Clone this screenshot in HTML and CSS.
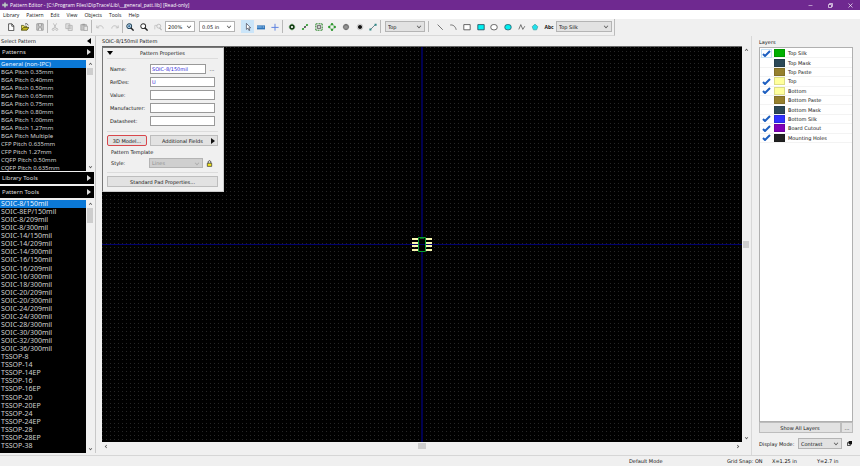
FILE: index.html
```
<!DOCTYPE html>
<html lang="en">
<head>
<meta charset="utf-8">
<title>Pattern Editor</title>
<link rel="stylesheet" href="styles.css">
</head>
<body>
<header class="titlebar">
  <svg class="logo" viewBox="0 0 10 10"><path d="M5 0L7 3H10V7H7L5 10L3 7H0V3H3Z" fill="#8f8aa8"/><path d="M5 1V9M1 5H9" stroke="#cfe0d0" stroke-width="1.6"/></svg>
  <h1 class="title">Pattern Editor - [C:\Program Files\DipTrace\Lib\__general_patt.lib] [Read-only]</h1>
  <div class="window-buttons">
    <button aria-label="Minimize"><svg viewBox="0 0 10 10"><path d="M1 5H9" stroke="#fff"/></svg></button>
    <button aria-label="Restore"><svg viewBox="0 0 10 10"><path d="M1 3H7V9H1ZM3 3V1H9V7H7" fill="none" stroke="#fff" stroke-width="1.3"/></svg></button>
    <button aria-label="Close"><svg viewBox="0 0 10 10"><path d="M1 1L9 9M9 1L1 9" stroke="#fff" stroke-width="1.3"/></svg></button>
  </div>
</header>
<nav class="menubar">
  <button>Library</button><button>Pattern</button><button>Edit</button><button>View</button><button>Objects</button><button>Tools</button><button>Help</button>
</nav>
<div class="toolbar">
  <div class="tools tools-3">
    <button aria-label="New"><svg viewBox="0 0 10 10"><path d="M2 1H6L8.500 3.500V9.500H2Z" fill="#fff" stroke="#333"/><path d="M6 1V4H8.500" fill="none" stroke="#333"/></svg></button>
    <button aria-label="Open"><svg viewBox="0 0 10 10"><path d="M0.500 9V3H3L4 4H7V5.500" fill="#e8dc50" stroke="#555520"/><path d="M0.500 9L3 5.500H10L7.500 9Z" fill="#c5b81c" stroke="#4a4a10"/><path d="M5 1.500C7 0 8 1 9 3" fill="none" stroke="#333"/></svg></button>
    <button aria-label="Save"><svg viewBox="0 0 10 10"><path d="M1 1H9V9H1Z" fill="#d5d5d5" stroke="#8d8d8d"/><path d="M3 1H7V4H3ZM3 9V6H7V9" fill="#eee" stroke="#8d8d8d"/></svg></button>
  </div>
  <div class="tools tools-3">
    <button aria-label="Cut" disabled><svg viewBox="0 0 10 10"><path d="M3 0.500L6.500 7M7 0.500L3.500 7" stroke="#b5b5b5"/><circle cx="2.800" cy="8" r="1.300" fill="none" stroke="#b5b5b5"/><circle cx="7.200" cy="8" r="1.300" fill="none" stroke="#b5b5b5"/></svg></button>
    <button aria-label="Copy" disabled><svg viewBox="0 0 10 10"><path d="M1 1H6V7H1ZM4 3H9V9.500H4Z" fill="#e4e4e4" stroke="#b0b0b0"/><path d="M5 5H8M5 7H8" stroke="#bbb"/></svg></button>
    <button aria-label="Paste" disabled><svg viewBox="0 0 10 10"><path d="M1 2H8V9H1Z" fill="#c4c4c4" stroke="#a4a4a4"/><path d="M3 1H6V3H3Z" fill="#999"/><path d="M5 4H9.500V9.500H5Z" fill="#e6e6e6" stroke="#a4a4a4"/></svg></button>
  </div>
  <div class="tools tools-2">
    <button aria-label="Undo" disabled><svg viewBox="0 0 10 10"><path d="M1 3V6H4M1 6C4 2 9 3 9 7" fill="none" stroke="#b9b9b9"/></svg></button>
    <button aria-label="Redo" disabled><svg viewBox="0 0 10 10"><path d="M9 3V6H6M9 6C6 2 1 3 1 7" fill="none" stroke="#b9b9b9"/></svg></button>
  </div>
  <div class="tools tools-zoom">
    <button aria-label="Zoom in"><svg viewBox="0 0 10 10"><circle cx="4" cy="4" r="3" fill="#cfe4f2" stroke="#26485e" stroke-width="1.300"/><path d="M2.500 4H5.500M4 2.500V5.500" stroke="#1c5a90"/><path d="M6 6L9.500 9.500" stroke="#222" stroke-width="1.800"/></svg></button>
    <button aria-label="Zoom out"><svg viewBox="0 0 10 10"><circle cx="4" cy="4" r="3" fill="#fff" stroke="#333" stroke-width="1.300"/><path d="M6 6L9.500 9.500" stroke="#222" stroke-width="1.800"/></svg></button>
    <button aria-label="Zoom window" disabled><svg viewBox="0 0 10 10"><path d="M1 8V3H4" fill="none" stroke="#c2c2c2"/><circle cx="6" cy="4" r="2.500" fill="#eee" stroke="#b5b5b5"/><path d="M7 6L9.500 9" stroke="#b5b5b5" stroke-width="1.500"/></svg></button>
  </div>
  <span class="combo combo-zoom"><select aria-label="Zoom"><option>200%</option></select></span>
  <span class="combo combo-grid"><select aria-label="Grid"><option>0.05 in</option></select></span>
  <div class="tools tools-mode">
    <button aria-label="Select" class="active"><svg viewBox="0 0 10 10"><path d="M3 0.500V8L4.800 6.500L6.200 9.500L7.300 9L6 6H8.300Z" fill="#fff" stroke="#334" stroke-width="0.800"/></svg></button>
    <button aria-label="Measure"><svg viewBox="0 0 10 10"><path d="M0 3H10V8H0Z" fill="#2f74b8"/><path d="M0 4H6V6H0Z" fill="#6aa5dc"/><path d="M7 5H9" stroke="#cfe4ff"/></svg></button>
    <button aria-label="Origin"><svg viewBox="0 0 10 10"><path d="M5 1V9.500M0.500 5.500H9.500" stroke="#5b7fe0" stroke-width="1.200"/></svg></button>
  </div>
  <div class="tools tools-7">
    <button aria-label="Place pad"><svg viewBox="0 0 10 10"><circle cx="5" cy="5" r="2.400" fill="#fff" stroke="#143a14" stroke-width="2"/><path d="M5 1V2M5 8V9M1 5H2M8 5H9" stroke="#2fa02f" stroke-width="1.500"/></svg></button>
    <button aria-label="Pad line"><svg viewBox="0 0 10 10"><path d="M2 8L8 2" stroke="#777"/><circle cx="2.500" cy="7.500" r="1.400" fill="#2fa02f"/><circle cx="5" cy="5" r="1.200" fill="#444"/><circle cx="7.500" cy="2.500" r="1.400" fill="#2fa02f"/></svg></button>
    <button aria-label="Pad array"><svg viewBox="0 0 10 10"><path d="M1 1H9V9H1Z" fill="none" stroke="#348a34" stroke-width="1.400" stroke-dasharray="1.400 .6"/><path d="M3 3H7V7H3Z" fill="#cfcfcf" stroke="#555"/></svg></button>
    <button aria-label="Pad circle"><svg viewBox="0 0 10 10"><path d="M5 1L9 5L5 9L1 5Z" fill="none" stroke="#8a8"/><g fill="#2f9a2f"><circle cx="5" cy="1.600" r="1.500"/><circle cx="8.400" cy="5" r="1.500"/><circle cx="5" cy="8.400" r="1.500"/><circle cx="1.600" cy="5" r="1.500"/></g></svg></button>
    <button aria-label="Mounting hole"><svg viewBox="0 0 10 10"><circle cx="5" cy="5" r="2.800" fill="#ddd" stroke="#777" stroke-width="1.600"/><path d="M5 1V9M1 5H9" stroke="#555" stroke-width=".8"/></svg></button>
    <button aria-label="Hole"><svg viewBox="0 0 10 10"><circle cx="5" cy="5" r="2.600" fill="#111"/><circle cx="5" cy="5" r="3.600" fill="none" stroke="#bbb"/></svg></button>
    <button aria-label="Dimension"><svg viewBox="0 0 10 10"><path d="M1.500 8.500L8.500 1.500" stroke="#4f6d78"/><path d="M0.500 7H3V9.500H0.500ZM7 1H9.500V3.500H7Z" fill="#2e8585"/></svg></button>
  </div>
  <div class="side-select"><span class="combo combo-layer grey"><select aria-label="Side"><option>Top</option></select></span></div>
  <div class="tools tools-9">
    <button aria-label="Line"><svg viewBox="0 0 10 10"><path d="M2 2L8.500 8.500" stroke="#555"/></svg></button>
    <button aria-label="Arc"><svg viewBox="0 0 10 10"><path d="M1.500 2.500C5 2 8 4 9 8.500" fill="none" stroke="#555"/></svg></button>
    <button aria-label="Rectangle"><svg viewBox="0 0 10 10"><path d="M1 2H9V8.500H1Z" fill="#fff" stroke="#444"/></svg></button>
    <button aria-label="Filled rectangle"><svg viewBox="0 0 10 10"><path d="M1 2H9V8.500H1Z" fill="#00f0f0" stroke="#245"/></svg></button>
    <button aria-label="Ellipse"><svg viewBox="0 0 10 10"><rect x="1" y="2" width="8" height="6.500" rx="3" fill="#fff" stroke="#444"/></svg></button>
    <button aria-label="Filled ellipse"><svg viewBox="0 0 10 10"><rect x="1" y="2" width="8" height="6.500" rx="3" fill="#00f0f0" stroke="#256"/></svg></button>
    <button aria-label="Polyline"><svg viewBox="0 0 10 10"><path d="M1 8L3.500 2L6 8L8.500 4" fill="none" stroke="#555"/></svg></button>
    <button aria-label="Polygon"><svg viewBox="0 0 10 10"><path d="M5 1.500L8.500 4.500L7 8.500H3L1.500 4.500Z" fill="#1fe0ec" stroke="#4aa"/></svg></button>
    <button aria-label="Text" class="text-tool">Abc</button>
  </div>
  <span class="combo combo-silk grey"><select aria-label="Layer"><option>Top Silk</option></select></span>
</div>
<main class="workspace">
  <aside class="library">
    <div class="side-title">Select Pattern<i class="arrow left"></i></div>
    <button class="section">Patterns<i class="arrow"></i></button>
    <div class="listbox short">
      <ul>
        <li class="selected">General (non-IPC)</li><li>BGA Pitch 0.35mm</li><li>BGA Pitch 0.40mm</li><li>BGA Pitch 0.50mm</li><li>BGA Pitch 0.65mm</li><li>BGA Pitch 0.75mm</li><li>BGA Pitch 0.80mm</li><li>BGA Pitch 1.00mm</li><li>BGA Pitch 1.27mm</li><li>BGA Pitch Multiple</li><li>CFP Pitch 0.635mm</li><li>CFP Pitch 1.27mm</li><li>CQFP Pitch 0.50mm</li><li>CQFP Pitch 0.635mm</li>
      </ul>
      <div class="scroll"><i class="chev up"></i><i class="thumb"></i><i class="chev"></i></div>
    </div>
    <button class="section">Library Tools<i class="arrow"></i></button>
    <button class="section">Pattern Tools<i class="arrow"></i></button>
    <div class="listbox tall">
      <ul>
        <li class="selected">SOIC-8/150mil</li><li>SOIC-8EP/150mil</li><li>SOIC-8/209mil</li><li>SOIC-8/300mil</li><li>SOIC-14/150mil</li><li>SOIC-14/209mil</li><li>SOIC-14/300mil</li><li>SOIC-16/150mil</li><li>SOIC-16/209mil</li><li>SOIC-16/300mil</li><li>SOIC-18/300mil</li><li>SOIC-20/209mil</li><li>SOIC-20/300mil</li><li>SOIC-24/209mil</li><li>SOIC-24/300mil</li><li>SOIC-28/300mil</li><li>SOIC-30/300mil</li><li>SOIC-32/300mil</li><li>SOIC-36/300mil</li><li>TSSOP-8</li><li>TSSOP-14</li><li>TSSOP-14EP</li><li>TSSOP-16</li><li>TSSOP-16EP</li><li>TSSOP-20</li><li>TSSOP-20EP</li><li>TSSOP-24</li><li>TSSOP-24EP</li><li>TSSOP-28</li><li>TSSOP-28EP</li><li>TSSOP-38</li>
      </ul>
      <div class="scroll"><i class="chev up"></i><i class="thumb big"></i><i class="chev"></i></div>
    </div>
  </aside>
  <section class="editor">
    <div class="side-title">SOIC-8/150mil Pattern</div>
    <div class="canvas">
      <svg class="footprint" viewBox="0 0 20 15">
        <g fill="#f7f7ae"><path d="M0 1H6V3H0ZM0 5H6V7H0ZM0 8H6V10H0ZM0 12H6V14H0ZM14 1H20V3H14ZM14 5H20V7H14ZM14 8H20V10H14ZM14 12H20V14H14Z"/></g>
        <path d="M6.500 0.500H13.500V14.500H6.500Z" fill="#000" stroke="#0a9c30"/><path d="M8 1.500H12" stroke="#086a22"/><path d="M7 7.500H13" stroke="#00006e"/>
      </svg>
      <form class="properties">
        <h2><i class="arrow down"></i>Pattern Properties</h2>
        <div class="fields">
          <label for="name">Name:</label><span class="with-more"><input id="name" value="SOIC-8/150mil"><button type="button" class="more">...</button></span>
          <label for="refdes">RefDes:</label><input id="refdes" value="U">
          <label for="value">Value:</label><input id="value">
          <label for="manufacturer">Manufacturer:</label><input id="manufacturer">
          <label for="datasheet">Datasheet:</label><input id="datasheet">
        </div>
        <div class="actions">
          <button type="button" class="push model">3D Model...</button>
          <button type="button" class="push extra">Additional Fields<i class="arrow"></i></button>
        </div>
        <fieldset>
          <legend>Pattern Template</legend>
          <label for="style">Style:</label>
          <span class="combo off"><select id="style" disabled><option>Lines</option></select></span>
          <svg class="lock" viewBox="0 0 8 8"><path d="M2.500 4V2.500C2.500 0.200 5.500 0.200 5.500 2.500V4" fill="none" stroke="#333"/><path d="M1.500 3.700H6.500V7.300H1.500Z" fill="#f3e51a" stroke="#333" stroke-width=".8"/></svg>
        </fieldset>
        <button type="button" class="push wide">Standard Pad Properties...</button>
      </form>
    </div>
    <div class="scroll vertical"><i class="chev up"></i><i class="thumb middle"></i><i class="chev"></i></div>
    <div class="scroll flat"><i class="chev prev"></i><i class="thumb middle"></i><i class="chev next"></i></div>
  </section>
  <aside class="layers">
    <div class="side-title">Layers</div>
    <div class="layer-list">
      <ul>
        <li><label><input type="checkbox" checked><svg viewBox="0 0 9 7"><path d="M1 4L3 6L8 1"/></svg><i class="swatch green"></i>Top Silk</label></li>
        <li><label><input type="checkbox"><svg viewBox="0 0 9 7"><path d="M1 4L3 6L8 1"/></svg><i class="swatch slate"></i>Top Mask</label></li>
        <li><label><input type="checkbox"><svg viewBox="0 0 9 7"><path d="M1 4L3 6L8 1"/></svg><i class="swatch ochre"></i>Top Paste</label></li>
        <li><label><input type="checkbox" checked><svg viewBox="0 0 9 7"><path d="M1 4L3 6L8 1"/></svg><i class="swatch yellow"></i>Top</label></li>
        <li><label><input type="checkbox" checked><svg viewBox="0 0 9 7"><path d="M1 4L3 6L8 1"/></svg><i class="swatch yellow"></i>Bottom</label></li>
        <li><label><input type="checkbox"><svg viewBox="0 0 9 7"><path d="M1 4L3 6L8 1"/></svg><i class="swatch ochre"></i>Bottom Paste</label></li>
        <li><label><input type="checkbox"><svg viewBox="0 0 9 7"><path d="M1 4L3 6L8 1"/></svg><i class="swatch slate"></i>Bottom Mask</label></li>
        <li><label><input type="checkbox" checked><svg viewBox="0 0 9 7"><path d="M1 4L3 6L8 1"/></svg><i class="swatch blue"></i>Bottom Silk</label></li>
        <li><label><input type="checkbox" checked><svg viewBox="0 0 9 7"><path d="M1 4L3 6L8 1"/></svg><i class="swatch purple"></i>Board Cutout</label></li>
        <li><label><input type="checkbox" checked><svg viewBox="0 0 9 7"><path d="M1 4L3 6L8 1"/></svg><i class="swatch dark"></i>Mounting Holes</label></li>
      </ul>
    </div>
    <div class="layer-actions"><button class="push">Show All Layers</button><button class="push dots">...</button></div>
    <div class="display"><label for="display">Display Mode:</label><span class="combo grey"><select id="display"><option>Contrast</option></select></span>
      <svg viewBox="0 0 6 6"><path d="M0.500 2H4V5.500H0.500Z" fill="#fff" stroke="#222"/><path d="M2 0H6V4H2Z" fill="#111"/></svg></div>
  </aside>
</main>
<footer class="status"><span class="mode">Default Mode</span><span>Grid Snap: ON</span><span>X=1.25 in</span><span>Y=2.7 in</span></footer>
</body>
</html>
```
FILE: styles.css
```
* { box-sizing: border-box; }
body {
  margin: 0;
  height: 100vh;
  display: flex;
  flex-direction: column;
  overflow: hidden;
  background: #f0f0f0;
  color: #111;
  font: 5px/8px "DejaVu Sans", "Noto Sans", sans-serif;
}
button, input, select {
  font: inherit;
  color: inherit;
  margin: 0;
  padding: 0;
  border: 0;
  background: none;
  border-radius: 0;
  appearance: none;
}
ul { list-style: none; margin: 0; padding: 0; }
svg { display: block; }

.titlebar { display: flex; align-items: center; height: 10px; flex: none; background: #6f2990; color: #fff; padding-left: 2px; gap: 2px; }
.logo { width: 6px; height: 6px; }
.titlebar, .menubar { font-family: "Open Sans", "Noto Sans", sans-serif; }
.title { margin: 0; flex: 1; font-size: 5px; font-weight: 400; }
.window-buttons { display: flex; }
.window-buttons button { width: 20px; display: flex; justify-content: center; }
.window-buttons svg { width: 5px; height: 5px; }

.menubar { display: flex; align-items: center; gap: 7px; height: 9px; flex: none; background: #fff; padding-left: 3px; }

.toolbar { display: flex; align-items: center; height: 17px; flex: none; padding: 0 0 1px 4px; width: 615px; border-bottom: 1px solid #d8d8d8; border-right: 1px solid #bbb; }
.tools { display: flex; justify-content: space-around; align-items: center; border-right: 1px solid #b8b8b8; }
.tools button { width: 13px; height: 13px; display: flex; align-items: center; justify-content: center; }
.tools svg { width: 8px; height: 8px; }
.tools .active { background: #cbe5f9; }
.tools .text-tool { font: 700 5px/8px "Open Sans", sans-serif; }
.tools-2 { width: 31px; }
.tools-3 { width: 44px; }
.tools-zoom { width: 42px; border: 0; }
.tools-mode { width: 48px; padding-left: 6px; }
.tools-7 { width: 98px; padding-left: 2px; }
.tools-9 { width: 123px; border: 0; }
.side-select { padding: 0 3px 0 4px; border-right: 1px solid #b8b8b8; margin-right: 4px; }

.combo { position: relative; display: block; }
.combo select { display: block; width: 100%; height: 11px; padding: 0 8px 0 2px; border: 1px solid #b4b4b4; background: #fff; line-height: 8px; opacity: 1; }
.combo::after { content: ""; position: absolute; right: 4px; top: 3px; width: 3px; height: 3px; border: solid #555; border-width: 0 1px 1px 0; transform: rotate(45deg) scale(.8); pointer-events: none; }
.grey select { background: #e2e2e2; }
.off select { background: #cfcfcf; color: #8f8f8f; }
.off::after { border-color: #aaa; }
.combo-zoom { width: 30px; margin-right: 4px; }
.combo-grid { width: 36px; }
.combo-layer { width: 40px; }
.combo-silk { width: 56px; }

.workspace { display: flex; flex: 1; min-height: 0; }
.side-title { display: flex; align-items: center; justify-content: space-between; height: 10px; flex: none; padding-left: 1px; }
.arrow { border: solid transparent; border-width: 3px 0 3px 4px; border-left-color: currentColor; }
.arrow.left { border-width: 3px 4px 3px 0; border-right-color: #000; margin-right: 3px; }
.arrow.down { border-width: 4px 3px 0; border-color: #000 transparent; }

.library { width: 96px; display: flex; flex-direction: column; padding-right: 1px; margin-bottom: 2px; border-right: 1px solid #c8c8c8; }
.section { display: flex; justify-content: space-between; align-items: center; height: 12px; flex: none; background: #000; color: #dcdcdc; padding: 0 3px 0 2px; font: 6px/8px "Noto Sans", sans-serif; margin-bottom: 2px; }
.listbox { display: flex; background: #000; color: #d0d0d0; font: 7px/8px "Noto Sans", sans-serif; overflow: hidden; }
.listbox ul { flex: 1; display: flex; flex-direction: column; }
.listbox li { padding-left: 1px; flex: none; white-space: nowrap; }
.listbox .selected { background: #0b78d6; color: #e9f3ff; }
.short { height: 111px; flex: none; margin-bottom: 1px; font-size: 6px; }
.tall { flex: 1; min-height: 0; }
.tall ul { padding-bottom: 3px; }
.listbox.tall li { flex: 1; }

.scroll { width: 8px; flex: none; background: #f0f0f0; display: flex; flex-direction: column; align-items: center; padding: 3px 0; gap: 2px; }
.chev { width: 3px; height: 3px; flex: none; border: solid #555; border-width: 0 1px 1px 0; transform: rotate(45deg) scale(.8); margin-top: auto; }
.chev.up { transform: rotate(-135deg) scale(.8); margin: 0; }
.thumb { width: 6px; height: 7px; background: #cdcdcd; flex: none; }
.thumb.big { height: 15px; }
.vertical .chev, .flat .chev { margin: 0; }

.editor { flex: 1; min-width: 0; display: grid; grid-template: 10px 1fr 8px / 1fr 8px; padding: 0 1px 5px 6px; border-right: 1px solid #d8d8d8; }
.editor .side-title { grid-column: 1 / 3; padding-left: 0; }
.canvas {
  position: relative;
  display: grid;
  place-items: center;
  background:
    linear-gradient(#000050, #000050) center / 2px 100% no-repeat,
    linear-gradient(#00006e, #00006e) center / 100% 1px no-repeat,
    conic-gradient(from 270deg at 1px 1px, #262626 90deg, #000 0) 0 0 / 4px 4px;
  border-top: 1px solid #666;
}
.footprint { width: 20px; height: 15px; }
.flat { width: auto; flex-direction: row; padding: 0 3px; }
.flat .prev { transform: rotate(135deg) scale(.8); }
.flat .next { transform: rotate(-45deg) scale(.8); }
.thumb.middle { margin: auto; }
.flat .thumb { width: 8px; height: 6px; }

.properties { position: absolute; left: 0; top: 0; width: 122px; padding: 0 5px 4px 4px; background: #f0f0f0; border: 1px solid #777; border-right-color: #ccc; border-bottom-color: #ccc; }
.properties h2 { position: relative; margin: 0 0 5px; height: 11px; line-height: 11px; font-size: 5px; font-weight: 400; text-align: center; border-bottom: 1px solid #dcdcdc; }
.properties h2 .arrow { position: absolute; left: 0; top: 3px; }
.fields { display: grid; grid-template-columns: 37px 1fr; gap: 3px; align-items: center; padding: 0 3px; }
.fields input { width: 100%; min-width: 0; height: 10px; padding: 0 1px; border: 1px solid #999; background: #fff; color: #2a22d8; }
.with-more { display: flex; gap: 3px; }
.with-more .more { width: 6px; flex: none; }
.push { height: 11px; background: #e2e2e2; border: 1px solid #bdbdbd; }
.actions { display: flex; gap: 3px; margin-top: 5px; padding-top: 3px; border-top: 1px solid #dcdcdc; }
.model { width: 40px; border-color: #d8474c; border-radius: 2px; }
.extra { flex: 1; display: flex; justify-content: space-between; align-items: center; padding: 0 2px 0 11px; }
fieldset { display: flex; align-items: center; margin: 2px 0 3px; padding: 2px 4px 4px; border: 0; border-bottom: 1px solid #dcdcdc; }
legend { padding: 0; }
fieldset label { width: 38px; }
fieldset .combo { width: 54px; margin-right: 3px; }
fieldset .combo select { height: 10px; }
.lock { width: 7px; height: 7px; }
.wide { display: block; width: 100%; }

.layers { width: 108px; display: flex; flex-direction: column; padding: 0 7px 6px 7px; }
.layers .side-title { height: 11px; padding-left: 0; }
.layer-list { flex: 1; background: #fff; border: 1px solid #b0b0b0; padding-top: 1px; }
.layer-list ul { display: grid; grid-auto-rows: 1fr; height: 94px; }
.layer-list li { border-bottom: 1px solid #f3f3f3; }
.layer-list label { display: flex; align-items: center; height: 100%; padding-left: 2px; }
.layer-list input { width: 0; height: 0; }
.layer-list svg { width: 9px; height: 7px; margin-right: 3px; visibility: hidden; fill: none; stroke: #1d5fc0; stroke-width: 2; }
.layer-list li:first-child svg { outline: 1px solid #c4e2f6; }
.layer-list input:checked + svg { visibility: visible; }
.swatch { width: 11px; height: 8px; margin-right: 3px; border: 1px solid #0002; }
.green { background: #00b000; }
.slate { background: #2b4857; }
.ochre { background: #96802d; }
.yellow { background: #ffff9c; }
.blue { background: #3030ff; }
.purple { background: #8000b8; }
.dark { background: #222; }
.layer-actions { display: flex; }
.layer-actions .push { flex: 1; }
.layer-actions .dots { flex: none; width: 12px; }
.display { display: flex; align-items: center; margin-top: 5px; white-space: nowrap; }
.display label { width: 39px; }
.display .combo { width: 44px; margin-right: 5px; }
.display svg { width: 5px; height: 5px; }

.status { display: flex; align-items: center; height: 11px; flex: none; border-top: 1px solid #d6d6d6; padding-right: 43px; gap: 10px; }
.status span { width: 35px; white-space: nowrap; }
.status span:last-child { margin-right: -35px; }
.status .mode { margin-left: auto; width: 88px; }
```
